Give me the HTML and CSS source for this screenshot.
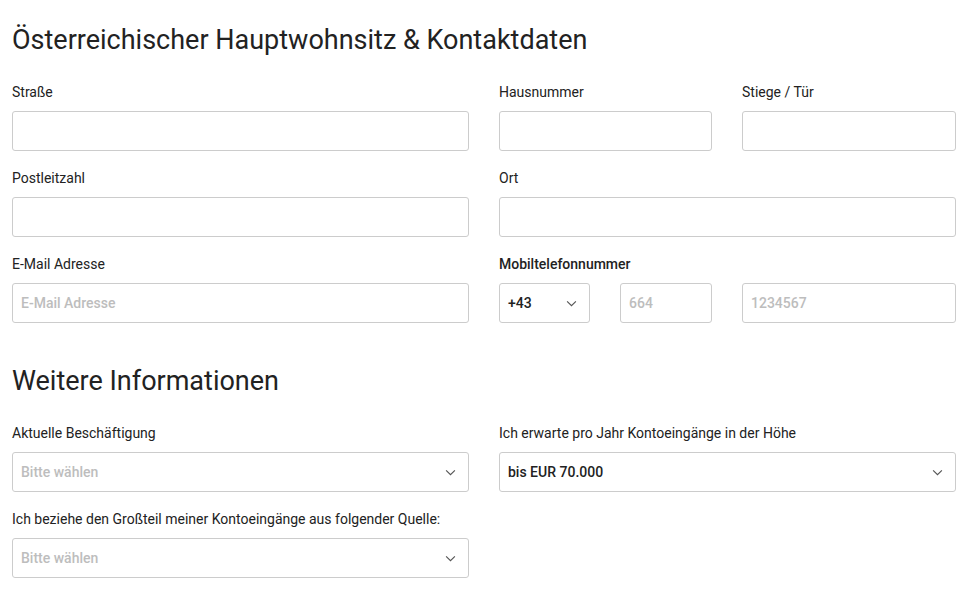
FILE: index.html
```html
<!DOCTYPE html>
<html lang="de">
<head>
    <meta charset="UTF-8">
    <meta name="viewport" content="width=device-width, initial-scale=1.0">
    <title>Hauptwohnsitz &amp; Kontaktdaten</title>
    <link rel="stylesheet" href="styles.css">
</head>
<body>
    <div class="form-container">
        <h2>Österreichischer Hauptwohnsitz &amp; Kontaktdaten</h2>
        <div class="form-grid">
            <div class="form-group">
                <label for="street">Straße</label>
                <input type="text" id="street">
            </div>
            <div class="form-group">
                <label for="houseNo">Hausnummer</label>
                <input type="text" id="houseNo">
            </div>
            <div class="form-group">
                <label for="door">Stiege / Tür</label>
                <input type="text" id="door">
            </div>

            <div class="form-group">
                <label for="zip">Postleitzahl</label>
                <input type="text" id="zip">
            </div>
            <div class="form-group wide">
                <label for="city">Ort</label>
                <input type="text" id="city">
            </div>

            <div class="form-group">
                <label for="email">E-Mail Adresse</label>
                <input type="email" id="email" placeholder="E-Mail Adresse">
            </div>
            <div class="form-group wide">
                <label for="prefix" class="strong">Mobiltelefonnummer</label>
                <div class="phone-row">
                    <div class="select filled">
                        <span>+43</span>
                        <svg class="chevron" viewBox="0 0 12 8"><path d="M1 1.5l5 5 5-5"/></svg>
                    </div>
                    <input type="tel" id="prefix" placeholder="664">
                    <input type="tel" id="phone" placeholder="1234567">
                </div>
            </div>
        </div>

        <h2 class="second">Weitere Informationen</h2>
        <div class="form-grid">
            <div class="form-group">
                <label>Aktuelle Beschäftigung</label>
                <div class="select">
                    <span>Bitte wählen</span>
                    <svg class="chevron" viewBox="0 0 12 8"><path d="M1 1.5l5 5 5-5"/></svg>
                </div>
            </div>
            <div class="form-group wide">
                <label>Ich erwarte pro Jahr Kontoeingänge in der Höhe</label>
                <div class="select filled">
                    <span>bis EUR 70.000</span>
                    <svg class="chevron" viewBox="0 0 12 8"><path d="M1 1.5l5 5 5-5"/></svg>
                </div>
            </div>
            <div class="form-group">
                <label>Ich beziehe den Großteil meiner Kontoeingänge aus folgender Quelle:</label>
                <div class="select">
                    <span>Bitte wählen</span>
                    <svg class="chevron" viewBox="0 0 12 8"><path d="M1 1.5l5 5 5-5"/></svg>
                </div>
            </div>
        </div>
    </div>
</body>
</html>
```

FILE: styles.css
```css
body {
    margin: 0;
    background: #fff;
    color: #222;
    font-family: Roboto, "Liberation Sans", sans-serif;
}
.form-container {
    padding: 0 12px;
}
h2 {
    font-size: 27px;
    font-weight: 400;
    line-height: 36px;
    margin: 22px 0 25px;
    color: #222;
}
h2.second {
    margin-top: 40px;
    margin-bottom: 25px;
}
.form-grid {
    display: grid;
    grid-template-columns: 457px 213px 214px;
    column-gap: 30px;
    row-gap: 18px;
}
.form-group.wide {
    grid-column: span 2;
}
label {
    display: block;
    font-size: 14px;
    line-height: 18px;
    margin-bottom: 10px;
    color: #222;
}
label.strong {
    font-weight: 500;
}
input, .select {
    box-sizing: border-box;
    width: 100%;
    height: 40px;
    padding: 0 8px;
    border: 1px solid #ccc;
    border-radius: 3px;
    background: #fff;
    font-family: inherit;
    font-size: 14px;
    font-weight: 500;
    color: #222;
    outline: none;
}
input::placeholder {
    color: #bdbdbd;
}
.select {
    display: flex;
    align-items: center;
    justify-content: space-between;
    color: #bdbdbd;
    padding-right: 12px;
}
.select.filled {
    color: #222;
}
.chevron {
    width: 11px;
    height: 7px;
    fill: none;
    stroke: #555;
    stroke-width: 1.3;
}
.phone-row {
    display: grid;
    grid-template-columns: 91px 92px 1fr;
    column-gap: 30px;
}
```
